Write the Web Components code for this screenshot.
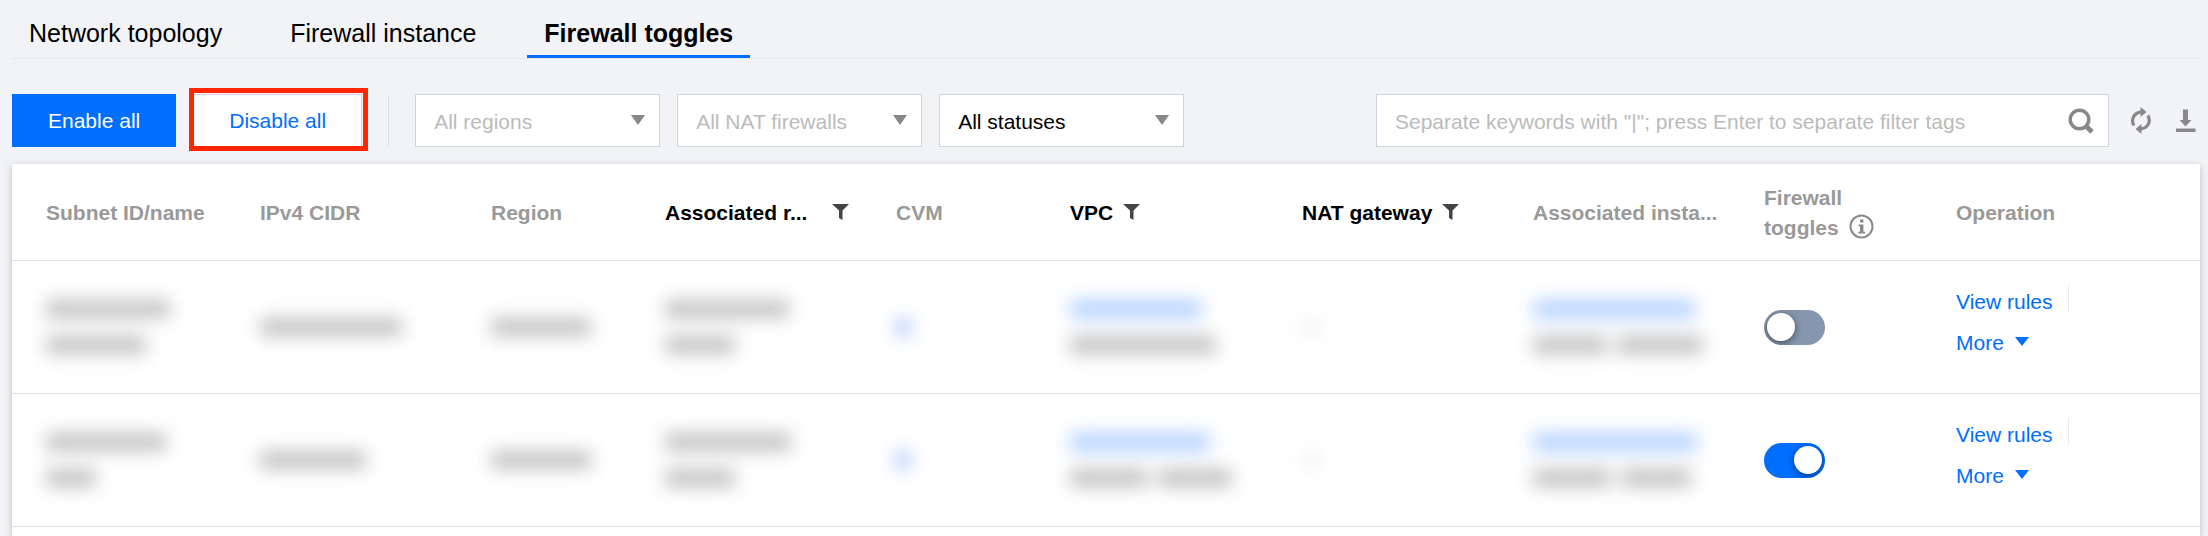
<!DOCTYPE html>
<html lang="en">
<head>
<meta charset="utf-8">
<meta name="viewport" content="width=device-width, initial-scale=1">
<title>Firewall toggles</title>
<style>
html, body { margin: 0; }
body {
  --blue: #006eff;
  --line: #dce1e8;
  --field-line: #cfd5de;
  --muted: #999;
  background: #f2f3f7;
  color: #000;
  font: 21px/30px "Liberation Sans", Arial, sans-serif;
}
</style>
</head>
<body>
<firewall-page></firewall-page>

<template id="page-t">
<style>
:host { display: flex; flex-direction: column; min-height: 100vh; box-sizing: border-box; padding: 0 8px 0 12px; overflow: hidden; }
.bar { display: flex; align-items: center; gap: 17px; margin: 35px 0 17px; }
.rule { width: 1px; height: 52px; margin: 0 9px; background: var(--line); }
search-box { flex: 0 1 733px; margin-left: auto; }
.tools { display: flex; gap: 22px; margin: 0 4px; }
firewall-table { flex: 1; }
</style>
<tab-bar>
  <tab-link>Network topology</tab-link>
  <tab-link>Firewall instance</tab-link>
  <tab-link active>Firewall toggles</tab-link>
</tab-bar>
<div class="bar">
  <push-button primary>Enable all</push-button>
  <push-button marked>Disable all</push-button>
  <span class="rule"></span>
  <filter-select label="Region" text="All regions" muted></filter-select>
  <filter-select label="NAT firewall" text="All NAT firewalls" muted></filter-select>
  <filter-select label="Status" text="All statuses"></filter-select>
  <search-box></search-box>
  <div class="tools">
    <icon-button label="Refresh" icon="refresh"></icon-button>
    <icon-button label="Download" icon="download"></icon-button>
  </div>
</div>
<firewall-table></firewall-table>
</template>

<template id="tabs-t">
<style>
:host { display: block; border-bottom: 1px solid #e7e9ee; }
nav { display: flex; gap: 34px; }
</style>
<nav><slot></slot></nav>
</template>

<template id="tab-t">
<style>
:host { display: block; }
a { display: block; box-sizing: border-box; height: 58px; padding: 18px 17px 0; border-bottom: 3px solid transparent; color: #000; font-size: 25px; text-decoration: none; white-space: nowrap; }
:host([active]) a { font-weight: bold; border-color: var(--blue); }
</style>
<a href="#"><slot></slot></a>
</template>

<template id="button-t">
<style>
:host { display: block; position: relative; flex: none; }
button { display: block; height: 53px; padding: 0 35px; border: 1px solid var(--field-line); background: #fff; color: var(--blue); font: inherit; cursor: pointer; }
:host([primary]) button { background: var(--blue); border-color: var(--blue); color: #fff; }
:host([marked])::after { content: ""; position: absolute; inset: -6px -6px -4px -4px; border: 5px solid #ff2600; pointer-events: none; }
</style>
<button type="button"><slot></slot></button>
</template>

<template id="select-t">
<style>
:host { display: block; position: relative; flex: 0 1 245px; min-width: 0; }
select { appearance: none; display: block; box-sizing: border-box; width: 100%; height: 53px; padding: 2px 40px 0 18px; border: 1px solid var(--field-line); border-radius: 0; background: #fff; color: #000; font: inherit; }
:host([muted]) select { color: #bbb; }
svg { position: absolute; right: 15px; top: 21px; pointer-events: none; }
</style>
<select><option></option></select>
<svg width="14" height="10" viewBox="0 0 14 10"><path d="M0 0H14L7 10Z" fill="#888"/></svg>
</template>

<template id="search-t">
<style>
:host { display: flex; align-items: center; box-sizing: border-box; height: 53px; padding: 0 14px 0 18px; border: 1px solid var(--field-line); background: #fff; }
input { flex: 1; min-width: 0; height: 48px; padding: 2px 0 0; border: 0; outline: 0; background: none; color: #000; font: inherit; }
input::placeholder { color: #bbb; opacity: 1; }
button { display: block; padding: 0; border: 0; background: none; }
svg { display: block; }
</style>
<input type="text" aria-label="Search" placeholder='Separate keywords with "|"; press Enter to separate filter tags'>
<button type="button" aria-label="Search"><svg width="26" height="26" viewBox="0 0 26 26" fill="none" stroke="#888"><circle cx="11.500" cy="11.500" r="9.300" stroke-width="3.400"/><path d="M17.500 17.500L24 24" stroke-width="5"/></svg></button>
</template>

<template id="icon-t">
<style>
:host { display: block; }
button { display: block; padding: 0; border: 0; background: none; color: #888; }
svg { display: block; }
</style>
<button type="button"></button>
</template>

<template id="switch-t">
<style>
:host { display: block; }
input { appearance: none; display: flex; align-items: center; box-sizing: border-box; width: 61px; height: 35px; margin: 0; padding: 0 3px; border-radius: 18px; background: #8696ae; overflow: hidden; }
input::before { content: ""; width: 28px; height: 28px; border-radius: 50%; background: #fff; box-shadow: 0 2px 7px rgba(0, 0, 0, .5); }
input:checked { justify-content: flex-end; background: var(--blue); }
</style>
<input type="checkbox" role="switch" aria-label="Firewall">
</template>

<template id="hidden-t">
<style>
:host { display: grid; gap: 18px; filter: blur(9px); }
div { display: flex; gap: 10px; }
i { display: block; height: 18px; background: #c2c2c2; }
i.blue { background: #b4d0ff; }
i.dim { background: #a8c4ff; }
i.faint { height: 3px; background: #bbb; }
</style>
</template>

<template id="table-t">
<style>
:host { display: block; background: #fff; box-shadow: 0 2px 7px rgba(54, 58, 80, .3); }
table { width: 100%; table-layout: fixed; border-collapse: separate; border-spacing: 0; }
th, td { box-sizing: border-box; padding: 0 0 0 17px; border-bottom: 1px solid var(--line); text-align: left; vertical-align: middle; white-space: nowrap; }
th:first-child, td:first-child { padding-left: 34px; }
th { height: 97px; padding-top: 1px; color: var(--muted); }
td { height: 133px; }
.sort { display: flex; align-items: center; gap: 10px; color: #000; }
.sort span { padding-top: 1px; }
.clip { flex: 0 0 157px; }
.two { display: flex; align-items: flex-end; gap: 7px; }
svg { display: block; }
.info { margin-bottom: 4px; }
.ops { display: flex; flex-direction: column; gap: 11px; padding-bottom: 9px; }
.ops div { display: flex; align-items: center; }
a { color: var(--blue); text-decoration: none; }
.sep { width: 1px; height: 26px; margin: -8px 0 0 15px; background: #e5e8ed; }
.more { display: flex; align-items: center; gap: 11px; }
.more svg { margin-top: -4px; }
</style>
<table>
  <colgroup>
    <col style="width:231px"><col style="width:231px"><col style="width:174px"><col style="width:231px"><col style="width:174px"><col style="width:232px"><col style="width:231px"><col style="width:231px"><col style="width:192px"><col style="width:261px">
  </colgroup>
  <thead>
    <tr>
      <th>Subnet ID/name</th>
      <th>IPv4 CIDR</th>
      <th>Region</th>
      <th><div class="sort"><span class="clip">Associated r...</span><filter-icon></filter-icon></div></th>
      <th>CVM</th>
      <th><div class="sort"><span>VPC</span><filter-icon></filter-icon></div></th>
      <th><div class="sort"><span>NAT gateway</span><filter-icon></filter-icon></div></th>
      <th>Associated insta...</th>
      <th><div class="two"><span>Firewall<br>toggles</span><svg class="info" width="25" height="25" viewBox="0 0 25 25"><circle cx="12.500" cy="12.500" r="11" fill="none" stroke="#888" stroke-width="2"/><path d="M11 5.500h3.400v3H11zM9.500 10.500h4.900v7.200H16v1.800H9.300v-1.800H11v-5.400H9.500z" fill="#888"/></svg></div></th>
      <th>Operation</th>
    </tr>
  </thead>
  <tbody></tbody>
</table>
</template>

<template id="filter-t">
<style>
:host { display: block; }
button { display: block; padding: 0; border: 0; background: none; }
svg { display: block; margin-bottom: 2px; }
</style>
<button type="button" aria-label="Filter"><svg width="17" height="16" viewBox="0 0 17 16"><path d="M0 0H17L10.500 6.500V16L7 14V6.500Z" fill="#444"/></svg></button>
</template>

<script>
class Base extends HTMLElement {
  constructor() {
    super();
    this.attachShadow({ mode: "open" }).append(document.getElementById(this.constructor.template).content.cloneNode(true));
  }
  $(selector) { return this.shadowRoot.querySelector(selector); }
}

class TabBar extends Base { static template = "tabs-t"; }
class TabLink extends Base { static template = "tab-t"; }
class PushButton extends Base { static template = "button-t"; }
class SearchBox extends Base { static template = "search-t"; }
class FilterIcon extends Base { static template = "filter-t"; }

class FilterSelect extends Base {
  static template = "select-t";
  connectedCallback() {
    this.$("select").setAttribute("aria-label", this.getAttribute("label"));
    this.$("option").textContent = this.getAttribute("text");
  }
}

const ICONS = {
  refresh: `<svg width="22" height="28" viewBox="0 0 22 28"><g fill="none" stroke="currentColor" stroke-width="3.200"><path d="M4 18.500A8.600 8.600 0 0 1 11 5.200"/><path d="M17.800 8.500A8.600 8.600 0 0 1 11 21.800"/></g><path d="M10.500 0L16.500 5L10.500 10ZM11.500 17L5.500 22L11.500 27Z" fill="currentColor"/></svg>`,
  download: `<svg width="22" height="28" viewBox="0 0 22 28"><path d="M9 2.500H14V13H17.500L11.500 19.500L5.500 13H9ZM2 21.500H21.500V25H2Z" fill="currentColor"/></svg>`
};
class IconButton extends Base {
  static template = "icon-t";
  connectedCallback() {
    const button = this.$("button");
    button.setAttribute("aria-label", this.getAttribute("label"));
    button.innerHTML = ICONS[this.getAttribute("icon")];
  }
}

class ToggleSwitch extends Base {
  static template = "switch-t";
  connectedCallback() { this.$("input").checked = this.hasAttribute("on"); }
}

/* A hidden value: lines are split by "|", and each bar is "width" or "width:tone". */
class HiddenValue extends Base {
  static template = "hidden-t";
  connectedCallback() {
    for (const line of this.getAttribute("bars").split("|")) {
      const row = document.createElement("div");
      for (const bar of line.split(" ")) {
        const [width, tone] = bar.split(":");
        const block = document.createElement("i");
        block.style.width = width + "px";
        if (tone) block.className = tone;
        row.append(block);
      }
      this.shadowRoot.append(row);
    }
  }
}

const ROWS = [
  { on: false, cells: ["124|100", "142", "100", "124|70", "14:dim", "132:blue|146", "18:faint", "162:blue|74 86"] },
  { on: true, cells: ["120|50", "106", "100", "126|70", "14:dim", "140:blue|78 74", "18:faint", "164:blue|78 70"] }
];
class FirewallTable extends Base {
  static template = "table-t";
  connectedCallback() {
    this.$("tbody").innerHTML = ROWS.map(row => `<tr>
      ${row.cells.map(bars => `<td><hidden-value bars="${bars}"></hidden-value></td>`).join("")}
      <td><toggle-switch${row.on ? " on" : ""}></toggle-switch></td>
      <td><div class="ops">
        <div><a href="#">View rules</a><span class="sep"></span></div>
        <div><a class="more" href="#">More<svg width="14" height="9" viewBox="0 0 14 9"><path d="M0 0H14L7 9Z" fill="currentColor"/></svg></a></div>
      </div></td>
    </tr>`).join("");
  }
}

class FirewallPage extends Base { static template = "page-t"; }

customElements.define("tab-bar", TabBar);
customElements.define("tab-link", TabLink);
customElements.define("push-button", PushButton);
customElements.define("search-box", SearchBox);
customElements.define("filter-icon", FilterIcon);
customElements.define("filter-select", FilterSelect);
customElements.define("icon-button", IconButton);
customElements.define("toggle-switch", ToggleSwitch);
customElements.define("hidden-value", HiddenValue);
customElements.define("firewall-table", FirewallTable);
customElements.define("firewall-page", FirewallPage);
</script>
</body>
</html>
